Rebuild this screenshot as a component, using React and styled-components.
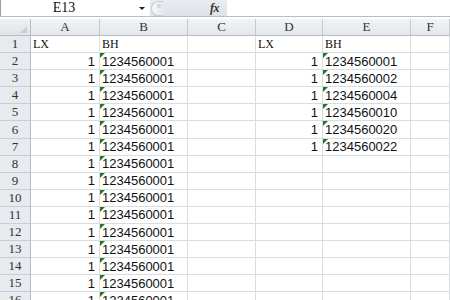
import React from "react";
import styled, { createGlobalStyle } from "styled-components";

const Global = createGlobalStyle`
  html, body { margin: 0; padding: 0; background: #ffffff; overflow: hidden; }
  #root { width: 450px; height: 300px; }
`;

const Frame = styled.div`
  width: 450px;
  height: 300px;
  overflow: hidden;
  background: #ffffff;
  display: flex;
  flex-direction: column;
`;

const FormulaBar = styled.div`
  display: flex;
  height: 17px;
  flex: 0 0 17px;
  box-sizing: border-box;
  border-bottom: 1px solid #b9bec5;
`;

const NameBox = styled.div`
  width: 150px;
  box-sizing: border-box;
  border-left: 1px solid #9a9ea4;
  display: flex;
  align-items: center;
  position: relative;
  background: #fff;
`;

const NameText = styled.span`
  flex: 1;
  text-align: center;
  padding-right: 12px;
  font-family: "Liberation Serif", serif;
  font-size: 14px;
  color: #111;
  line-height: 16px;
`;

const DropArrow = styled.span`
  width: 0;
  height: 0;
  margin-right: 5px;
  border-left: 3px solid transparent;
  border-right: 3px solid transparent;
  border-top: 3px solid #222;
`;

const FxArea = styled.div`
  width: 77px;
  background: linear-gradient(#e9ecf0, #dde1e6);
  display: flex;
  align-items: center;
  justify-content: space-between;
  padding-right: 8px;
  box-sizing: border-box;
`;

const Knob = styled.span`
  width: 13px;
  height: 15px;
  margin-left: 1px;
  border-radius: 8px 2px 2px 8px;
  background: linear-gradient(90deg, #f7f8fa, #e4e7eb);
  border: 1px solid #c9cdd3;
  border-right: none;
  box-sizing: border-box;
  position: relative;
  &::after {
    content: "";
    position: absolute;
    left: 5px;
    top: 2px;
    width: 4px;
    height: 4px;
    border-radius: 2px;
    background: #d2d6db;
  }
`;

const Fx = styled.span`
  font-family: "Liberation Serif", serif;
  font-style: italic;
  font-weight: bold;
  font-size: 12px;
  color: #333;
  letter-spacing: -0.5px;
`;

const FormulaInput = styled.div`
  flex: 1;
  background: #fff;
`;

const Spacer = styled.div`
  height: 2px;
  flex: 0 0 2px;
`;

const Grid = styled.div`
  display: grid;
  grid-template-columns: 31px 69px 88px 68px 67px 88px 1fr;
  grid-template-rows: 17px repeat(16, 17.1px);
`;

const Corner = styled.div`
  background: linear-gradient(#eef0f3, #e1e5ea);
  border-right: 1px solid #b7bcc3;
  border-bottom: 1px solid #b7bcc3;
  box-sizing: border-box;
  position: relative;
  &::after {
    content: "";
    position: absolute;
    right: 3px;
    bottom: 2px;
    width: 0;
    height: 0;
    border-left: 7px solid transparent;
    border-bottom: 7px solid #c9ced5;
  }
`;

const ColHead = styled.div`
  background: linear-gradient(#f2f4f6, #e2e6eb);
  border-right: 1px solid #c6cbd1;
  border-bottom: 1px solid #b7bcc3;
  box-sizing: border-box;
  display: flex;
  align-items: center;
  justify-content: center;
  font-family: "Liberation Serif", serif;
  font-size: 13px;
  color: #333;
`;

const RowHead = styled.div`
  background: #e7eaee;
  border-right: 1px solid #b7bcc3;
  border-bottom: 1px solid #c9ced4;
  box-sizing: border-box;
  display: flex;
  align-items: center;
  justify-content: center;
  font-family: "Liberation Serif", serif;
  font-size: 13px;
  color: #333;
`;

const Cell = styled.div`
  border-right: 1px solid #dadcdf;
  border-bottom: 1px solid #dadcdf;
  box-sizing: border-box;
  display: flex;
  align-items: center;
  justify-content: ${(p) => (p.$right ? "flex-end" : "flex-start")};
  padding: ${(p) => (p.$right ? "0 4px 0 0" : "0 0 0 2px")};
  font-family: ${(p) => (p.$serif ? '"Liberation Serif", serif' : '"Liberation Sans", Arial, sans-serif')};
  font-size: ${(p) => (p.$serif ? "12px" : "13px")};
  color: #111;
  position: relative;
  white-space: nowrap;
  overflow: visible;
`;

const Flag = styled.span`
  position: absolute;
  left: 0;
  top: 0;
  width: 0;
  height: 0;
  border-top: 5px solid #1e7b2a;
  border-right: 5px solid transparent;
`;

const eValues = [
  "1234560001",
  "1234560002",
  "1234560004",
  "1234560010",
  "1234560020",
  "1234560022",
];

const cols = ["A", "B", "C", "D", "E", "F"];

export default function App() {
  const rows = [];
  for (let r = 1; r <= 16; r++) {
    const isHead = r === 1;
    const hasE = r >= 2 && r <= 7;
    rows.push(
      <React.Fragment key={r}>
        <RowHead>{r}</RowHead>
        {isHead ? <Cell $serif>LX</Cell> : <Cell $right>1</Cell>}
        {isHead ? (
          <Cell $serif>BH</Cell>
        ) : (
          <Cell>
            <Flag />
            1234560001
          </Cell>
        )}
        <Cell />
        {isHead ? <Cell $serif>LX</Cell> : hasE ? <Cell $right>1</Cell> : <Cell />}
        {isHead ? (
          <Cell $serif>BH</Cell>
        ) : hasE ? (
          <Cell>
            <Flag />
            {eValues[r - 2]}
          </Cell>
        ) : (
          <Cell />
        )}
        <Cell />
      </React.Fragment>
    );
  }
  return (
    <Frame>
      <Global />
      <FormulaBar>
        <NameBox>
          <NameText>E13</NameText>
          <DropArrow />
        </NameBox>
        <FxArea>
          <Knob />
          <Fx>fx</Fx>
        </FxArea>
        <FormulaInput />
      </FormulaBar>
      <Spacer />
      <Grid>
        <Corner />
        {cols.map((c) => (
          <ColHead key={c}>{c}</ColHead>
        ))}
        {rows}
      </Grid>
    </Frame>
  );
}
